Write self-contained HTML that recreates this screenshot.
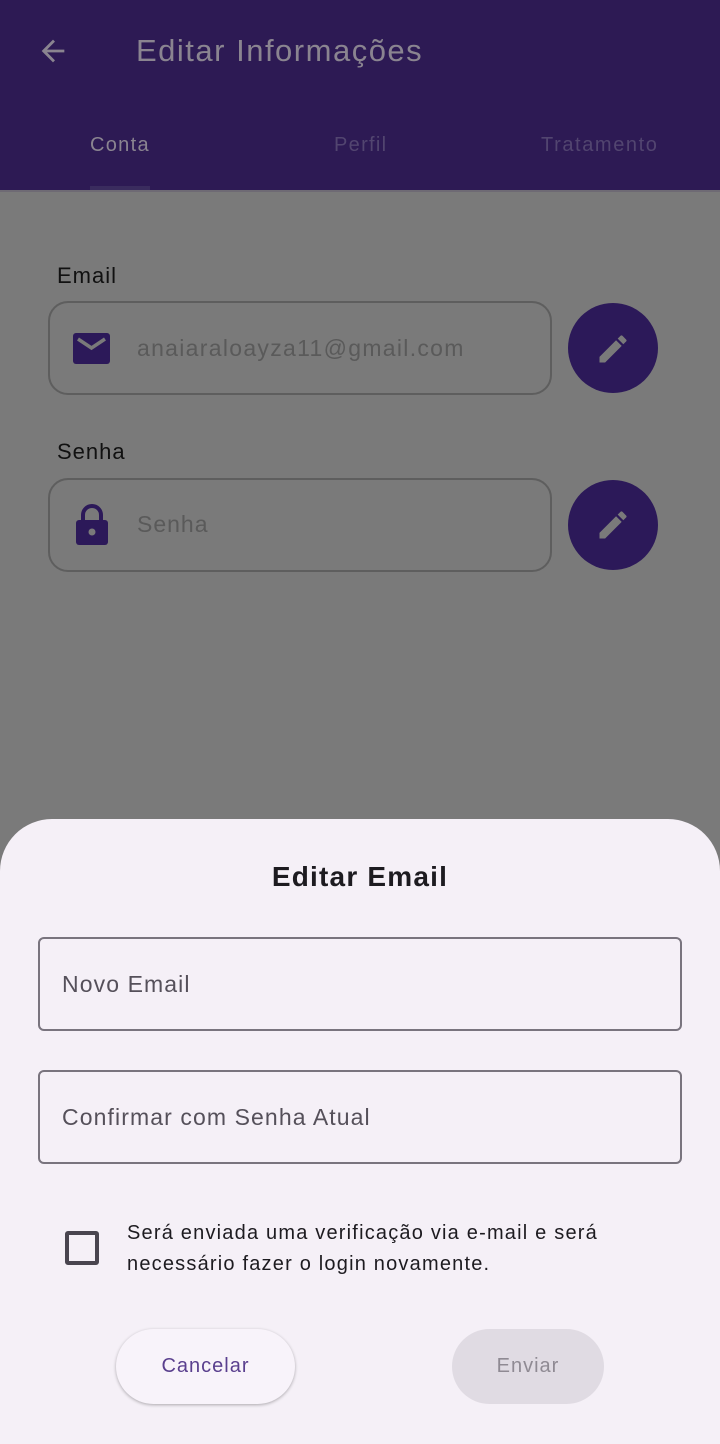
<!DOCTYPE html>
<html><head><meta charset="utf-8"><style>
*{box-sizing:border-box;margin:0;padding:0}
body{width:720px;height:1444px;position:relative;overflow:hidden;background:#7a7a7a;font-family:"Liberation Sans",sans-serif}
.hdr{position:absolute;left:0;top:0;width:720px;height:190px;background:#2d1a54}
.abs{position:absolute}
.field{position:absolute;left:48px;width:504px;height:94px;border:2px solid #5e5e5e;border-radius:20px}
.fab{position:absolute;left:568px;width:90px;height:90px;border-radius:50%;background:#2c1959}
.sheet{position:absolute;left:0;top:819px;width:720px;height:625px;background:#f5f0f7;border-radius:52px 52px 0 0}
.inp{position:absolute;left:38px;width:644px;height:94px;border:2px solid #79747e;border-radius:6px;font-size:23px;color:#55505a;padding-left:22px;line-height:90px;letter-spacing:1.1px}
</style></head><body>
<div class="hdr"></div>
<svg class="abs" style="left:36px;top:34px" width="34" height="34" viewBox="0 0 24 24"><path d="M20 11H7.8l5.6-5.6L12 4l-8 8 8 8 1.4-1.4L7.8 13H20z" fill="#8a8490"/></svg>
<div class="abs" style="left:136px;top:33px;font-size:31px;color:#8a8490;letter-spacing:1.5px">Editar Informações</div>
<div class="abs" style="left:90px;top:134px;font-size:20px;color:#8a8490;letter-spacing:1.3px">Conta</div>
<div class="abs" style="left:334px;top:134px;font-size:20px;color:#524570;letter-spacing:1.3px">Perfil</div>
<div class="abs" style="left:541px;top:134px;font-size:20px;color:#524570;letter-spacing:1.6px">Tratamento</div>
<div class="abs" style="left:90px;top:186px;width:60px;height:4px;background:#3a2c5e"></div>
<div class="abs" style="left:0;top:190px;width:720px;height:2px;background:#6e6a74"></div>

<div class="abs" style="left:57px;top:263px;font-size:22px;color:#111;letter-spacing:1px">Email</div>
<div class="field" style="top:301px"></div>
<svg class="abs" style="left:73px;top:333px" width="38" height="32" viewBox="0 0 38 32"><rect x="0" y="0" width="37" height="31" rx="3" fill="#2c1959"/><path d="M5 6l13.5 9L32 6" stroke="#7a7a7a" stroke-width="3.5" fill="none"/></svg>
<div class="abs" style="left:137px;top:335px;font-size:23px;color:#5a5a5a;letter-spacing:1.3px">anaiaraloayza11@gmail.com</div>
<div class="fab" style="top:303px"></div>
<svg class="abs" style="left:595px;top:331px" width="36" height="36" viewBox="0 0 24 24"><path d="M3 17.25V21h3.75L17.8 9.94l-3.75-3.75zM20.7 7.04a1 1 0 000-1.41l-2.34-2.34a1 1 0 00-1.41 0l-1.83 1.83 3.75 3.75z" fill="#7a7a7a"/></svg>

<div class="abs" style="left:57px;top:439px;font-size:22px;color:#111;letter-spacing:1px">Senha</div>
<div class="field" style="top:478px"></div>
<svg class="abs" style="left:76px;top:503px" width="32" height="42" viewBox="0 0 32 42"><path d="M7 18v-6a9 9 0 0118 0v6" stroke="#2c1959" stroke-width="4" fill="none"/><rect x="0" y="17" width="32" height="25" rx="3" fill="#2c1959"/><circle cx="16" cy="29" r="3.5" fill="#7a7a7a"/></svg>
<div class="abs" style="left:137px;top:511px;font-size:23px;color:#5a5a5a;letter-spacing:1px">Senha</div>
<div class="fab" style="top:480px"></div>
<svg class="abs" style="left:595px;top:507px" width="36" height="36" viewBox="0 0 24 24"><path d="M3 17.25V21h3.75L17.8 9.94l-3.75-3.75zM20.7 7.04a1 1 0 000-1.41l-2.34-2.34a1 1 0 00-1.41 0l-1.83 1.83 3.75 3.75z" fill="#7a7a7a"/></svg>

<div class="sheet"></div>
<div class="abs" style="left:0;top:861px;width:720px;text-align:center;font-size:28px;font-weight:bold;color:#1d1b20;letter-spacing:1.2px">Editar Email</div>
<div class="inp" style="top:937px">Novo Email</div>
<div class="inp" style="top:1070px">Confirmar com Senha Atual</div>
<div class="abs" style="left:65px;top:1231px;width:34px;height:34px;border:4px solid #49454f;border-radius:3px"></div>
<div class="abs" style="left:127px;top:1218px;font-size:20px;line-height:31px;color:#1d1b20;letter-spacing:1.2px">Será enviada uma verificação via e-mail e será<br>necessário fazer o login novamente.</div>
<div class="abs" style="left:116px;top:1329px;width:179px;height:75px;border-radius:38px;background:#f8f3fa;box-shadow:0 1px 3px rgba(0,0,0,.3);text-align:center;line-height:75px;font-size:20px;color:#5a3f8e;letter-spacing:1px">Cancelar</div>
<div class="abs" style="left:452px;top:1329px;width:152px;height:75px;border-radius:38px;background:#e0dbe3;text-align:center;line-height:75px;font-size:20px;color:#8f8a93;letter-spacing:1px">Enviar</div>
</body></html>
